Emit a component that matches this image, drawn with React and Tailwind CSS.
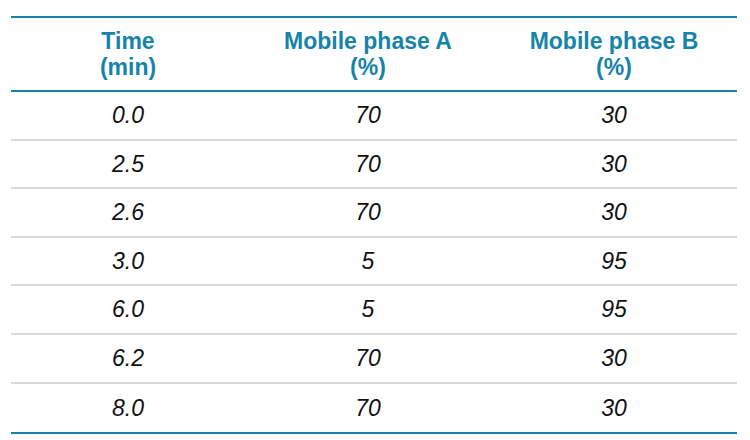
const rows = [
  ['0.0', '70', '30'],
  ['2.5', '70', '30'],
  ['2.6', '70', '30'],
  ['3.0', '5', '95'],
  ['6.0', '5', '95'],
  ['6.2', '70', '30'],
  ['8.0', '70', '30'],
];

const App = () => (
  <div className="w-[750px] h-[440px] bg-white pt-4 pl-[11px] font-['Liberation_Sans',Arial,sans-serif]">
    <div className="w-[726px] border-t-2 border-b-2 border-[#1a7fa4]">
      {/* Header */}
      <div className="grid grid-cols-[234px_246px_246px] h-[74px] pt-[10px] border-b-2 border-[#1a7fa4] text-[23px] leading-[26px] font-bold text-[#1584a8] text-center">
        <div>Time<br />(min)</div>
        <div>Mobile phase A<br />(%)</div>
        <div>Mobile phase B<br />(%)</div>
      </div>

      {/* Body */}
      {rows.map((r, i) => (
        <div
          key={i}
          className={`grid grid-cols-[234px_246px_246px] items-center h-[48.6px] text-[23px] italic text-[#111] text-center ${
            i < rows.length - 1 ? 'border-b-2 border-[#d9d9d9]' : ''
          }`}
        >
          <div>{r[0]}</div>
          <div>{r[1]}</div>
          <div>{r[2]}</div>
        </div>
      ))}
    </div>
  </div>
);

export default App;
